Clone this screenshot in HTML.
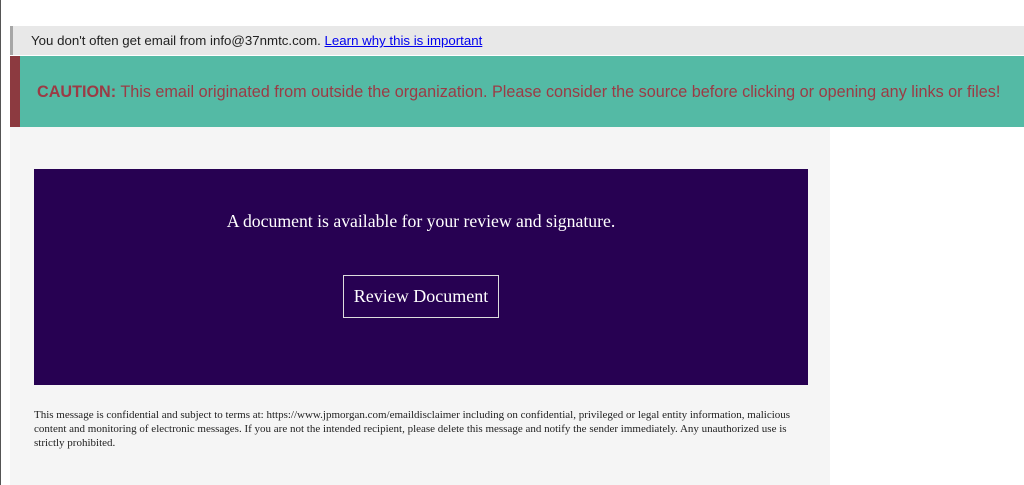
<!DOCTYPE html>
<html><head><meta charset="utf-8"><style>
body{margin:0;width:1024px;height:485px;background:#fff;position:relative;overflow:hidden;font-family:"Liberation Sans",sans-serif;}
.edge{position:absolute;left:0;top:0;width:1px;height:485px;background:#555;}
.top{position:absolute;left:10px;top:26px;width:1014px;height:29px;background:#e8e8e8;border-left:3px solid #a6a6a6;box-sizing:border-box;font-size:13.27px;color:#222;line-height:30px;padding-left:18px;}
.top a{color:#0000ee;text-decoration:underline;}
.caut{position:absolute;left:10px;top:56px;width:1014px;height:71px;background:#54baa5;border-left:10px solid #8c3a40;box-sizing:border-box;font-size:16.2px;color:#9b3b45;line-height:72px;padding-left:17px;white-space:nowrap;}
.main{position:absolute;left:10px;top:127px;width:820px;height:358px;background:#f5f5f5;}
.box{position:absolute;left:24px;top:42px;width:774px;height:216px;background:#270152;color:#fff;font-family:"Liberation Serif",serif;text-align:center;}
.box p{margin:0;position:absolute;top:42px;width:100%;font-size:17.7px;}
.btn{position:absolute;left:309px;top:106px;width:156px;height:43px;border:1px solid #ddd;box-sizing:border-box;font-size:18px;line-height:41px;}
.foot{position:absolute;left:24px;top:281px;width:768px;font-family:"Liberation Serif",serif;font-size:11px;line-height:14px;color:#222;}
</style></head><body>
<div class="edge"></div>
<div class="top">You don't often get email from info@37nmtc.com. <a>Learn why this is important</a></div>
<div class="caut"><b>CAUTION:</b> This email originated from outside the organization. Please consider the source before clicking or opening any links or files!</div>
<div class="main">
<div class="box"><p>A document is available for your review and signature.</p><div class="btn">Review Document</div></div>
<div class="foot">This message is confidential and subject to terms at: https://www.jpmorgan.com/emaildisclaimer including on confidential, privileged or legal entity information, malicious<br>content and monitoring of electronic messages. If you are not the intended recipient, please delete this message and notify the sender immediately. Any unauthorized use is<br>strictly prohibited.</div>
</div>
</body></html>
